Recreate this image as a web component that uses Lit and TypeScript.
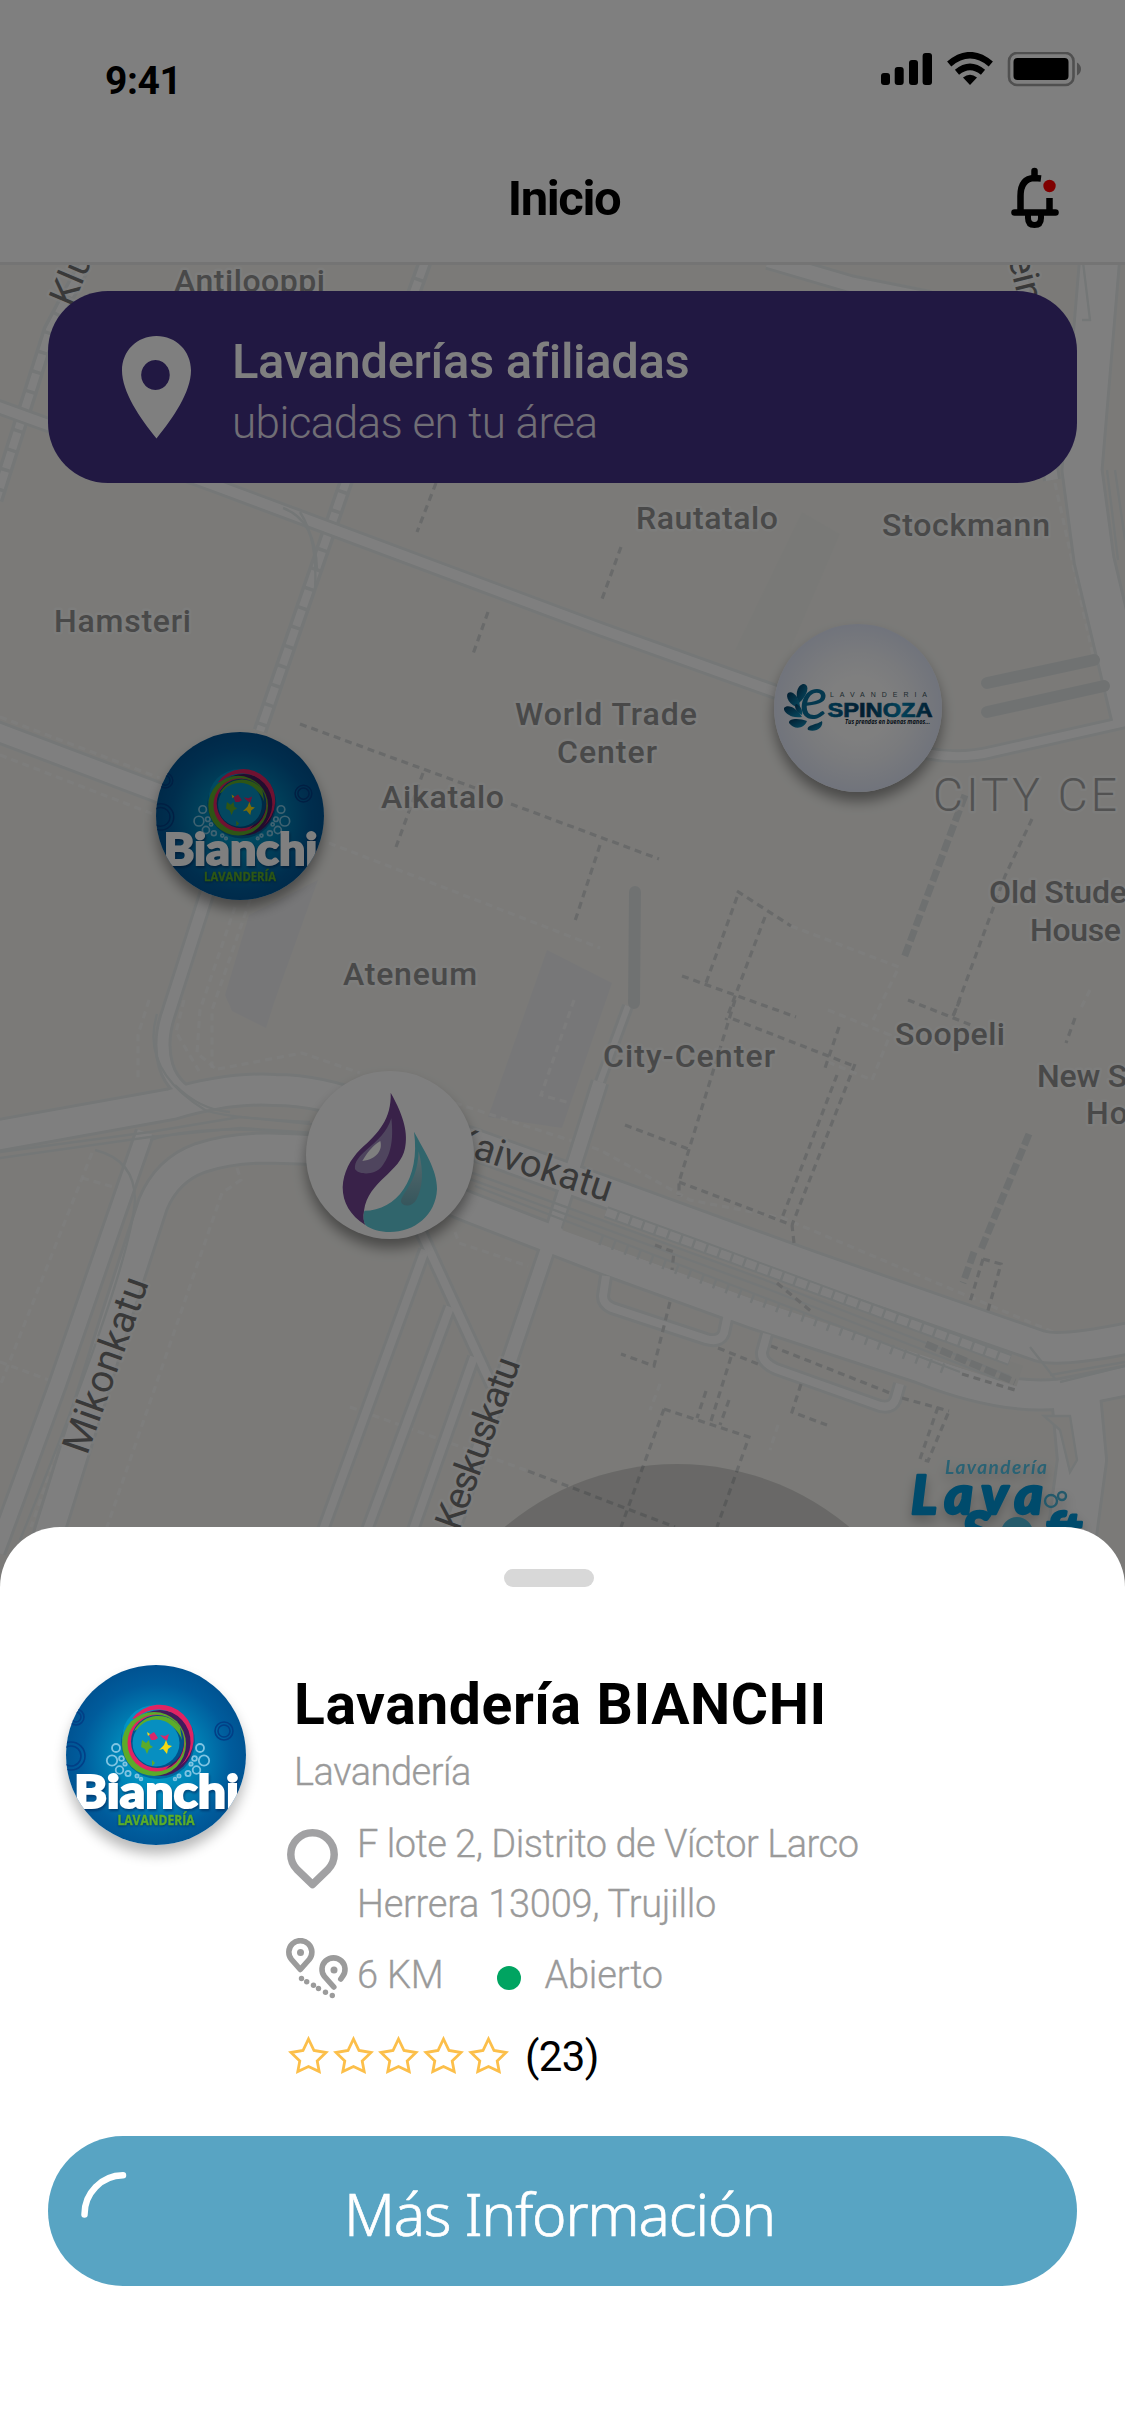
import { LitElement, html, svg, css } from "lit";
import { customElement } from "lit/decorators.js";

interface Road { d: string; w: number; }
interface Label { t: string; x: number; y: number; len: number; size?: number; kind?: string; rot?: number; }

/* Streets, widths in px. Drawn twice: casing first, then the white surface. */
const ROADS: Road[] = [
  { d: "M-10 404 L214 485 L600 629 L790 697", w: 10 },
  { d: "M925 753 Q960 760 992 752 L1130 721", w: 8 },
  { d: "M-5 731 L170 797", w: 17 },
  { d: "M230 820 L207 893 L168 1015 Q159 1042 166 1066 Q174 1092 205 1102", w: 11 },
  { d: "M145 1132 L57 1386 L-4 1552", w: 15 },
  { d: "M425 1250 L323 1530", w: 8 },
  { d: "M450 1307 L367 1530", w: 8 },
  { d: "M474 1357 L413 1530", w: 8 },
  { d: "M421 1232 L492 1386", w: 8 },
  { d: "M628 1006 L600 1082", w: 6 },
  { d: "M600 1082 L547 1250 L452 1530", w: 13 },
  { d: "M606 1276 L603 1296 Q603 1304 612 1308 L706 1339 Q720 1343 724 1333 L728 1314", w: 8 },
  { d: "M767 1334 L762 1352 Q761 1362 776 1369 L880 1406 Q893 1409 896 1398 L900 1384", w: 8 },
  { d: "M1100 255 L1082 470 L1094 560 L1132 720", w: 37 },
  { d: "M1018 255 L1052 480", w: 12 },
  { d: "M1075 1385 L1082 1460 L1062 1610", w: 46 },
  { d: "M768 260 L850 284 L930 300", w: 14 },
  { d: "M-5 1136 L172 1104 Q230 1087 275 1090 Q320 1090 370 1110 L470 1143 L600 1190 L812 1267 L1040 1346 Q1060 1352 1130 1338", w: 28 },
  { d: "M40 1562 L115 1321 L153 1204 Q167 1170 200 1158 Q230 1148 268 1148 L330 1150 L471 1208 L603 1259 L755 1314 L920 1368 Q1000 1400 1060 1394 L1130 1380", w: 27 },
];
const BRICK: Road[] = [
  { d: "M425 262 L346 482 L260 731", w: 8 },
  { d: "M86 262 L50 330 L-4 500", w: 8 },
];
/* Tram tracks and other hairlines. */
const TRACKS = [
  "M0 1152 L150 1132 L240 1117 L330 1126 L470 1172 L760 1278 L1010 1376",
  "M0 1158 L150 1137 L240 1128 L330 1134 L470 1179 L760 1286 L1000 1380",
  "M95 1150 Q135 1160 135 1200 Q130 1270 20 1540",
  "M150 1140 Q210 1122 310 1135",
  "M475 1186 L600 1234 L760 1296 L960 1372",
  "M283 508 Q316 520 317 570",
  "M300 512 Q318 540 315 590",
  "M157 1014 Q140 1070 205 1110 Q225 1118 310 1122",
  "M175 1085 Q200 1110 230 1112",
  "M1107 470 L1118 560 M1115 470 L1125 540 M1083 262 L1090 320 L1082 320",
  "M1030 1347 L1056 1380 M1060 1382 L1125 1366 M1050 1375 L1125 1362",
];
const DASH_DARK = [
  "M436 483 L417 532", "M488 612 L473 654", "M300 724 L475 788", "M511 804 L659 859", "M423 773 L396 847", "M600 845 L574 924",
  "M621 547 L602 599", "M737 891 L791 926", "M737 897 L706 983", "M765 917 L726 1020", "M682 976 L796 1017", "M1032 819 L1005 876 L953 1017",
  "M908 1000 L971 1025", "M960 1000 L953 1016", "M735 1000 L679 1182 L679 1196", "M733 1019 L854 1066", "M839 1027 L825 1068",
  "M837 1075 L782 1218", "M855 1064 L792 1225", "M625 1125 L691 1150", "M679 1182 L792 1225 L794 1243", "M670 1302 L654 1366 L621 1354",
  "M718 1348 L758 1364", "M731 1357 L711 1421", "M706 1391 L697 1418", "M729 1400 L720 1425", "M664 1409 L749 1437 L717 1527",
  "M664 1409 L621 1527", "M528 1471 L675 1527", "M801 1384 L792 1412 L827 1425", "M771 1346 L890 1393", "M902 1398 L949 1411",
  "M938 1407 L920 1459 L928 1461 L949 1411", "M983 1259 L969 1305", "M983 1259 L1001 1264 L987 1314", "M1075 1018 L1066 1043",
  "M655 1245 L674 1252 L672 1270", "M777 1283 L812 1312", "M962 1374 L1015 1390",
];
const DASH_LIGHT = [
  "M0 717 L160 778", "M0 755 L153 814", "M329 843 L600 948", "M218 1069 L302 1053 L360 1073", "M455 1103 L600 1150 L690 1200 L783 1218 L1072 1340",
  "M237 1168 L241 1180 L222 1193 L107 1527", "M147 1193 L31 1527", "M92 1153 L0 1386", "M350 1407 L528 1471", "M455 1232 L459 1243 L528 1266",
  "M235 907 L200 1010 L197 1053 L218 1071", "M250 900 L212 1010 L212 1068", "M149 1000 L138 1035 L138 1078", "M184 1000 L176 1032 L199 1071",
  "M791 926 L899 967 L873 1020", "M574 1000 L541 1095 L570 1103", "M828 1010 L890 1035 L872 1080 L828 1062", "M1055 483 L1094 660", "M1100 1410 L1106 1460 L1093 1527",
  "M1090 990 L1080 1010 M660 1384 L650 1410 M778 1425 L770 1450", "M82 1178 L117 1188 M0 1362 L65 1386",
];
const LABELS: Label[] = [
  { t: "Antilooppi", x: 174, y: 292, len: 151 },
  { t: "Hamsteri", x: 54, y: 631.5, len: 137 },
  { t: "Rautatalo", x: 636, y: 529, len: 142 },
  { t: "Stockmann", x: 882, y: 535.5, len: 168 },
  { t: "World Trade", x: 515, y: 725, len: 182 },
  { t: "Center", x: 557, y: 762.5, len: 100 },
  { t: "Aikatalo", x: 381, y: 808, len: 123 },
  { t: "Ateneum", x: 343, y: 985, len: 134 },
  { t: "City-Center", x: 603, y: 1067, len: 172 },
  { t: "Soopeli", x: 895, y: 1045, len: 110 },
  { t: "Old Stude", x: 989, y: 903, len: 138 },
  { t: "House", x: 1030, y: 940.5, len: 91 },
  { t: "New S", x: 1037, y: 1087, len: 90 },
  { t: "Ho", x: 1086, y: 1124, len: 42 },
  { t: "CITY CE", x: 933, y: 810.6, len: 184, size: 46, kind: "district" },
  { t: "Kaivokatu", x: 449, y: 1150, len: 167, size: 38, kind: "street", rot: 18.2 },
  { t: "Mikonkatu", x: 87, y: 1456, len: 184, size: 39, kind: "street", rot: -70.3 },
  { t: "Keskuskatu", x: 459, y: 1532, len: 180, size: 38, kind: "street", rot: -70 },
  { t: "Kluuvi", x: 72, y: 308, len: 102, size: 37, kind: "street", rot: -67 },
  { t: "ein", x: 1008, y: 258, len: 48, size: 37, kind: "street", rot: 76 },
];

@customElement("city-map")
class CityMap extends LitElement {
  static styles = css`
    :host { display: block; }
    svg { display: block; }
    path { fill: none; }
    .casing { stroke: #eaefef; }
    .road { stroke: #ffffff; }
    .track { stroke: #e9eeee; stroke-width: 2.4; }
    .bed { stroke: #f3f2ef; stroke-width: 22; }
    .dark { stroke: #d2d4d4; stroke-width: 3.2; stroke-dasharray: 7 5; }
    .light { stroke: #ffffff; stroke-width: 3; stroke-dasharray: 7 5; opacity: .6; }
    .trees { stroke: #e1e5e5; stroke-width: 12; stroke-linecap: round; }
    .hedge { stroke: #dce0e0; stroke-width: 7; stroke-dasharray: 12 4; }
    .block { fill: #efeff1; }
    .stall { stroke: #e9eeee; stroke-width: 10; stroke-dasharray: 2.5 11; }
    .stall-in { stroke: #e9eeee; stroke-width: 12; }
    text { font-family: Roboto, "Liberation Sans", sans-serif; paint-order: stroke; stroke: #ffffff; stroke-opacity: .55; stroke-width: 5px; stroke-linejoin: round; }
    .poi { fill: #929292; font-weight: 500; }
    .district { fill: #a4a4a4; font-weight: 300; }
    .street { fill: #727272; font-weight: 400; }
  `;
  render() {
    const all = (c: string, list: string[]) => list.map((d) => svg`<path class=${c} d=${d}></path>`);
    return html`<svg width="1125" height="1340" viewBox="0 262 1125 1340">
      <rect y="262" width="1125" height="1340" fill="#f6f5f1"></rect>
      <polygon class="block" points="249,915 318,880 275,1000 266,1028 232,1011 225,995"></polygon>
      <polygon class="block" points="547,950 612,983 562,1128 488,1117"></polygon>
      <polygon points="802,512 840,534 790,650 735,650" fill="#f3f2ee" opacity=".8"></polygon>
      ${all("light", DASH_LIGHT)}
      ${BRICK.map((r) => svg`<path class="casing" d=${r.d} stroke-width=${r.w + 7}></path><path class="road" d=${r.d} stroke-width=${r.w} stroke-dasharray="17 3.5"></path>`)}
      ${ROADS.map((r) => svg`<path class="casing" stroke-linejoin="round" d=${r.d} stroke-width=${r.w + 6}></path>`)}
      ${ROADS.map((r) => svg`<path class="road" stroke-linejoin="round" d=${r.d} stroke-width=${r.w}></path>`)}
      <path class="bed" d="M566 1220 L760 1290 L1020 1376"></path>
      <path class="stall-in" d="M606 1212 L700 1246 L1010 1360"></path>
      <path stroke="#fff" stroke-width="8" stroke-dasharray="11 2.5" d="M606 1212 L700 1246 L1010 1360"></path>
      <path class="stall" d="M600 1240 L760 1301 L950 1371"></path>
      ${all("track", TRACKS)}
      <path d="M1044 1416 L1070 1416 L1077 1460 L1070 1472 L1060 1430 Z" style="fill:#f6f5f1" class="track"></path>
      <path class="trees" d="M635 892 L634 1003 M987 683 L1094 660 M987 712 L1104 686"></path>
      <path class="hedge" d="M965 795 L904 958 M1029 1134 L980 1252 M974 1252 L963 1283 M926 1344 L1015 1382"></path>
      ${all("dark", DASH_DARK)}
      ${LABELS.map((l) => svg`<text class=${l.kind ?? "poi"} x=${l.x} y=${l.y} font-size=${l.size ?? 32} textLength=${l.len}
        transform=${`rotate(${l.rot ?? 0} ${l.x} ${l.y})`}>${l.t}</text>`)}
      <circle cx="677" cy="1731" r="267" fill="#000" opacity=".145"></circle>
    </svg>`;
  }
}

@customElement("bianchi-logo")
class BianchiLogo extends LitElement {
  static styles = css`
    :host { display: block; border-radius: 50%; overflow: hidden; }
    svg { display: block; width: 100%; height: 100%; }
    .name { font: 900 46px Lato, "Open Sans", sans-serif; fill: #fff; stroke: #fff; stroke-width: 2px; filter: drop-shadow(1px 2px 1px rgba(0, 40, 90, .6)); }
    .sub { font: 700 14px "Open Sans", sans-serif; fill: #5aae2a; stroke: #5aae2a; stroke-width: .4px; filter: drop-shadow(0 1px 1px rgba(0, 30, 70, .6)); }
    .bubble { fill: none; stroke: #7fc4e2; stroke-width: 1.8; }
    .far { fill: none; stroke: #023f86; stroke-width: 1.6; }
  `;
  render() {
    const bubbles = [[50, 83, 4], [46, 95.5, 5.2], [53.5, 105, 3.8], [55.5, 93.5, 2.4], [59, 99, 1.7], [62, 108.5, 2.6], [71, 111, 1.6], [75, 114, 1.4]];
    const far = [[10, 52, 8], [10, 52, 5], [5, 91, 14], [5, 91, 10], [158, 66, 9], [158, 66, 6]];
    return html`<svg viewBox="0 0 180 180">
      <defs>
        <radialGradient id="bg" cx=".5" cy=".52" r=".52"><stop offset="0" stop-color="#00a5cf"></stop><stop offset=".42" stop-color="#0086b8"></stop><stop offset=".8" stop-color="#005c9c"></stop><stop offset="1" stop-color="#005291"></stop></radialGradient>
      </defs>
      <rect width="180" height="180" fill="url(#bg)"></rect>
      ${far.map(([x, y, r]) => svg`<circle class="far" cx=${x} cy=${y} r=${r}></circle>`)}
      ${bubbles.map(([x, y, r]) => svg`<circle class="bubble" cx=${x} cy=${y} r=${r}></circle><circle class="bubble" cx=${184 - x} cy=${y} r=${r}></circle>`)}
      <circle cx="92" cy="77" r="37" fill="#00457f" opacity=".55"></circle>
      <circle cx="89" cy="73" r="33" fill="#0093c4"></circle>
      <circle cx="94" cy="78" r="33" fill="#421a5c"></circle>
      <path d="M66 54 A34 34 0 1 1 114 101 A31 31 0 1 0 70 53 Z" fill="#df2463"></path>
      <circle cx="88" cy="79" r="32" fill="#5cab2a"></circle>
      <path d="M110 54 A32 32 0 0 1 104 107 L116 99 A30 30 0 0 0 114 58 Z" fill="#421a5c"></path>
      <circle cx="90" cy="78" r="28.5" fill="#df2463"></circle>
      <path d="M113 62 A28 28 0 0 1 100 104 A34 34 0 0 0 108 62 Z" fill="#421a5c"></path>
      <circle cx="91.5" cy="76.5" r="26.5" fill="#00528c"></circle>
      <path d="M68 66 A27 27 0 0 1 114 62 L116 75 A27 27 0 0 0 72 64 Z" fill="#5cab2a"></path>
      <circle cx="90" cy="78" r="23.5" fill="#078fc1"></circle>
      <path d="M76 75 L80 78 L83 75 L84 80 L87 82 L83 84 L81 89 L79 84 L75 82 Z M86 95 L89 98 L86 101 Z" fill="#5cab2a"></path>
      <path d="M83 70 L88 67 L92 73 L89 75 L85 75 Z M94 70 L99 71 L103 69 L101 76 L97 73 Z" fill="#d8286b"></path>
      <path d="M100 75 L102 80 L106 81 L102 84 L101 89 L97 84 L93 85 L98 80 Z M81 67 L84 69 L82 71 Z" fill="#f3d811"></path>
      <text class="name" x="8" y="142.500" textLength="165" lengthAdjust="spacingAndGlyphs">Bianchi</text>
      <text class="sub" x="51.500" y="160" textLength="77" lengthAdjust="spacingAndGlyphs">LAVANDERÍA</text>
    </svg>`;
  }
}

@customElement("espinoza-logo")
class EspinozaLogo extends LitElement {
  static styles = css`
    :host { display: block; border-radius: 50%; background: radial-gradient(circle closest-side, #ffffff 35%, #f4f6fb 65%, #e2e8f8 100%); }
    svg { display: block; width: 100%; height: 100%; }
    .small { font: 400 7px "Liberation Sans", sans-serif; fill: #3b5560; }
    .name { font: 700 21px "Liberation Sans", sans-serif; fill: url(#ink); stroke: url(#ink); stroke-width: .7px; }
    .tag { font: italic 700 7.4px "Open Sans", sans-serif; fill: #0a2230; }
    .e { font: italic 400 58px Lato, sans-serif; fill: #08709c; }
  `;
  render() {
    const petals = [
      "M25 79 C20 70 24 60 30 60 C36 61 34 71 25 79 Z", "M26 84 C15 82 11 72 14 69 C19 66 26 74 26 84 Z",
      "M28 93 C17 95 9 88 10 84 C14 79 24 85 28 93 Z", "M33 97 C30 105 20 106 15 99 C14 94 26 94 33 97 Z",
      "M48 97 C50 103 42 109 34 106 C32 101 42 101 48 97 Z", "M28 91 C21 87 20 82 22 80 C26 81 29 86 28 91 Z",
    ];
    return html`<svg viewBox="0 0 168 168">
      <defs>
        <linearGradient id="ink" x1="0" x2="1"><stop offset="0" stop-color="#006f9f"></stop><stop offset=".35" stop-color="#06385b"></stop><stop offset=".7" stop-color="#0385b5"></stop><stop offset="1" stop-color="#053a5f"></stop></linearGradient>
        <linearGradient id="leaf" x1="0" y1="0" x2="1" y2="1"><stop offset="0" stop-color="#04375c"></stop><stop offset="1" stop-color="#1097c4"></stop></linearGradient>
      </defs>
      ${petals.map((d) => svg`<path d=${d} fill="url(#leaf)"></path>`)}
      <text class="e" x="26" y="95">e</text>
      <text class="small" x="56" y="73" textLength="97">LAVANDERIA</text>
      <text class="name" x="53.500" y="92.500" textLength="105" lengthAdjust="spacingAndGlyphs">SPINOZA</text>
      <text class="tag" x="71" y="100" textLength="85" lengthAdjust="spacingAndGlyphs">Tus prendas en buenas manos...</text>
    </svg>`;
  }
}

@customElement("drop-logo")
class DropLogo extends LitElement {
  static styles = css`
    :host { display: block; border-radius: 50%; background: #fff; }
    svg { display: block; width: 100%; height: 100%; }
  `;
  render() {
    return html`<svg viewBox="48 36 504 504">
      <defs>
        <linearGradient id="sheen" x1="0" x2="0" y1="0" y2="1"><stop offset="0" stop-color="#b4d8e0"></stop><stop offset="1" stop-color="#6fa8b4" stop-opacity=".85"></stop></linearGradient>
      </defs>
      <path fill="#724592" d="M302 101 C344 175 354 225 345 268 C332 340 235 365 222 455 Q218 480 226 498 C180 470 158 430 158 385 C160 340 180 302 212 270 C265 222 305 180 302 101 Z"></path>
      <path fill="#60cad8" d="M372 218 C402 275 441 330 441 390 C438 470 372 519 300 519 C270 519 244 512 226 498 Q217 480 223 455 C320 455 392 360 372 218 Z"></path>
      <path fill="#9f8bbd" d="M304 178 C312 250 300 290 276 322 C255 350 205 348 195 330 C192 308 210 290 230 272 C265 242 290 220 304 178 Z"></path>
      <path fill="#ffffff" d="M271 246 C278 272 262 300 217 306 C230 284 245 262 271 246 Z"></path>
      <path fill="url(#sheen)" d="M386 277 C402 340 398 385 380 420 C368 444 338 445 333 428 C335 400 382 375 386 277 Z"></path>
    </svg>`;
  }
}

@customElement("lavasoft-logo")
class LavasoftLogo extends LitElement {
  static styles = css`
    :host { display: block; }
    svg { display: block; overflow: visible; filter: drop-shadow(0 6px 6px rgba(0, 0, 0, .25)); }
    .top { font: italic 700 19px Lato, sans-serif; fill: #54c5e8; }
    .big { font: italic 900 54px Lato, sans-serif; fill: #0097d8; stroke: #0097d8; stroke-width: 2.6px; stroke-linejoin: round; }
    .ring { fill: none; stroke: #49b3d6; stroke-width: 2.4; }
  `;
  render() {
    return html`<svg width="180" height="90" viewBox="907 1455 180 90">
      <text class="top" x="945" y="1474" textLength="102">Lavandería</text>
      <text class="big" x="911" y="1514" textLength="132">Lava</text>
      <text class="big" x="962" y="1550" textLength="120">Soft</text>
      <circle cx="1017" cy="1533" r="16" fill="#4db6d6"></circle>
      <circle class="ring" cx="1051" cy="1501" r="6"></circle>
      <circle class="ring" cx="1062" cy="1496" r="4"></circle>
    </svg>`;
  }
}

@customElement("app-root")
class AppRoot extends LitElement {
  static styles = css`
    :host { display: block; width: 1125px; height: 2436px; overflow: hidden; background: #fff; font-family: Roboto, "Liberation Sans", sans-serif; color: #000; }
    * { box-sizing: border-box; }
    svg { display: block; flex: none; }
    .screen { position: relative; display: flex; flex-direction: column; height: 2436px; }
    .header { display: flex; flex-direction: column; height: 265px; background: #fff; border-bottom: 3px solid #e8e8e8; flex: none; }
    .status { display: flex; justify-content: space-between; padding: 52px 44px 0 105px; height: 118px; }
    .time { font-weight: 700; font-size: 39px; line-height: 44px; margin-top: 7px; letter-spacing: -.4px; }
    .icons { display: flex; }
    .nav { display: grid; grid-template-columns: 1fr auto 1fr; align-items: start; padding: 42px 62px 0; }
    .heading { grid-column: 2; margin: 9px 0 0 3px; font-weight: 700; font-size: 49px; line-height: 60px; letter-spacing: -1.400px; }
    .bell { justify-self: end; margin-top: 5px; }
    .map { position: relative; flex: none; height: 1325px; overflow: hidden; }
    .map city-map { position: absolute; left: 0; top: -3px; }
    .pin { position: absolute; width: 168px; height: 168px; box-shadow: 0 9px 13px rgba(0, 0, 0, .4); }
    .p1 { left: 156px; top: 467px; }
    .p2 { left: 774px; top: 359px; }
    .p3 { left: 306px; top: 806px; }
    .p4 { position: absolute; left: 907px; top: 1190px; }
    .banner { position: relative; display: flex; height: 192px; margin: 26px 48px 0; padding: 45px 0 0 74px; border-radius: 60px; background: #423085; }
    .copy { padding-left: 38px; }
    .b1 { margin: -4px 0 0; color: #fff; font-weight: 500; font-size: 49px; line-height: 60px; letter-spacing: -.350px; }
    .b2 { margin: 1px 0 0; color: #e0dcea; font-weight: 300; font-size: 44px; line-height: 60px; letter-spacing: -.600px; }
    .scrim { position: absolute; left: 0; top: 0; width: 1125px; height: 1590px; background: rgba(0, 0, 0, .5); }
    .sheet { position: relative; flex: none; display: flex; flex-direction: column; margin-top: -63px; height: 909px; background: #fff; border-radius: 60px 60px 0 0; padding: 42px 48px 0; }
    .handle { width: 90px; height: 18px; margin-left: 456px; border-radius: 9px; background: #d8d8d8; }
    .place { display: flex; gap: 40px; margin: 78px 0 0 18px; height: 471px; }
    .avatar { flex: none; width: 180px; height: 180px; box-shadow: 0 9px 13px rgba(0, 0, 0, .28); }
    .info { display: flex; flex-direction: column; }
    .name { margin: 10px 0 0 8px; font-weight: 700; font-size: 57px; line-height: 60px; letter-spacing: .600px; white-space: nowrap; }
    .type { margin: 15px 0 0 8px; line-height: 44px; letter-spacing: -.500px; }
    .muted { color: #9a9a9a; font-size: 38px; font-weight: 300; -webkit-text-stroke: .3px #9a9a9a; }
    .row { display: flex; line-height: 60px; white-space: nowrap; }
    .ico { width: 71px; flex: none; }
    .address { margin-top: 20px; letter-spacing: -.500px; }
    .second { letter-spacing: -.250px; }
    .distance { margin-top: 11px; height: 60px; align-items: center; letter-spacing: -.200px; }
    .dot { width: 24px; height: 24px; margin: 5px 23px 0 54px; border-radius: 50%; background: #00a461; }
    .rating { margin-top: 27px; line-height: 50px; font-size: 42px; }
    .count { margin-left: 14px; letter-spacing: -.600px; }
    .cta { display: flex; align-items: center; height: 150px; border: 0; border-radius: 75px; background: #58a4c3; color: #fff; padding: 0 0 0 32px; font: 300 58.500px "Noto Sans", sans-serif; letter-spacing: -1.150px; -webkit-text-stroke: .7px #fff; }
    .cta span { margin: 3px 0 0 216px; white-space: nowrap; }
    .cta svg { margin-top: -33px; }
  `;
  render() {
    const star = "M22.500 8 L28 19.500 L40 21.500 L31.200 30 L33.200 40.500 L22.500 35.500 L11.800 40.500 L13.800 30 L5 21.500 L17 19.500 Z";
    return html`<div class="screen">
      <header class="header">
        <div class="status">
          <div class="time">9:41</div>
          <div class="icons">
            <svg width="200" height="36" viewBox="881 52 200 36">
              <rect x="881" y="73" width="9" height="12" rx="3"></rect><rect x="894.700" y="67" width="9" height="18" rx="3"></rect>
              <rect x="909" y="60" width="9" height="25" rx="3"></rect><rect x="922.600" y="53" width="9.400" height="32" rx="3"></rect>
              <g fill="none" stroke="#000" stroke-width="6.500"><path d="M949.200 64 Q970 46.500 990.800 64"></path><path d="M957 72.300 Q970 61.500 983 72.300"></path></g>
              <path d="M963 77.500 Q970 72 977 77.500 L970 85 Z"></path>
              <rect x="1009" y="53" width="64.500" height="32" rx="8" fill="none" stroke="#a0a0a0" stroke-width="2.600"></rect>
              <rect x="1013.500" y="58" width="55" height="22" rx="4"></rect><path d="M1077 62.500 Q1081 65 1081 69 Q1081 73 1077 75.500 Z" fill="#a0a0a0"></path>
            </svg>
          </div>
        </div>
        <div class="nav">
          <h1 class="heading">Inicio</h1>
          <svg class="bell" width="54" height="66" viewBox="1009 165 54 66" fill="none" stroke="#000" stroke-width="6.500" stroke-linecap="round">
            <path d="M1034.500 171 V177"></path><path d="M1020.500 211 V196 Q1020.500 178.500 1034.500 178 Q1037 178 1041 178.500" stroke-linecap="butt"></path>
            <path d="M1014.500 212.500 H1055.500"></path><path d="M1049.500 198 V211" stroke-linecap="butt"></path>
            <path d="M1028 215 V218 Q1028 225 1034.500 225 Q1041 225 1041 218 V215" stroke-width="6" stroke-linecap="butt"></path>
            <circle cx="1049.500" cy="186" r="6.200" fill="#ff0000" stroke="none"></circle>
          </svg>
        </div>
      </header>
      <main class="map">
        <city-map></city-map>
        <bianchi-logo class="pin p1"></bianchi-logo>
        <espinoza-logo class="pin p2"></espinoza-logo>
        <drop-logo class="pin p3"></drop-logo>
        <lavasoft-logo class="p4"></lavasoft-logo>
        <section class="banner">
          <svg width="72" height="104" viewBox="0 0 72 104"><path fill="#fff" fill-rule="evenodd" d="M34.500 0 C15 0 0 15 0 34.500 C0 56 18 82 34.500 102.500 C51 82 69 56 69 34.500 C69 15 54 0 34.500 0 Z M33.500 24 A14.300 15 0 1 1 33.400 24 Z"></path></svg>
          <div class="copy"><p class="b1">Lavanderías afiliadas</p><p class="b2">ubicadas en tu área</p></div>
        </section>
      </main>
      <div class="scrim"></div>
      <section class="sheet">
        <div class="handle"></div>
        <div class="place">
          <bianchi-logo class="avatar"></bianchi-logo>
          <div class="info">
            <h2 class="name">Lavandería BIANCHI</h2>
            <div class="type muted">Lavandería</div>
            <div class="row address muted">
              <div class="ico"><svg width="54" height="78" viewBox="0 -15 54 78" fill="none" stroke="#a1a1a3" stroke-width="7.500" stroke-linejoin="round"><path d="M26.500 3.750 A21.700 21.700 0 0 0 4.800 25.500 Q4.800 34 11 40.500 L26.500 55.500 L42 40.500 Q48.200 34 48.200 25.500 A21.700 21.700 0 0 0 26.500 3.750 Z"></path></svg></div>
              <div>F lote 2, Distrito de Víctor Larco<br><span class="second">Herrera 13009, Trujillo</span></div>
            </div>
            <div class="row distance muted">
              <div class="ico"><svg width="64" height="74" viewBox="285 1938 64 74" fill="none" stroke="#9b9b9b" stroke-width="5.600" stroke-linecap="round" stroke-linejoin="round">
                <path d="M299.300 1969.500 L290.500 1959.500 A11.500 11.500 0 1 1 308.200 1959.500 Z"></path>
                <path d="M332.800 1987 L323.500 1976.500 A11.500 11.500 0 1 1 341.500 1976.500 L339.800 1979"></path>
                <g fill="#9b9b9b" stroke="none"><circle cx="299.500" cy="1952.500" r="3.500"></circle><circle cx="333" cy="1970" r="3.500"></circle>
                <circle cx="300.500" cy="1978.500" r="2.700"></circle><circle cx="305.700" cy="1981.700" r="2.700"></circle><circle cx="312.500" cy="1985.300" r="2.700"></circle><circle cx="317.500" cy="1988.500" r="2.700"></circle><circle cx="324.500" cy="1992.300" r="2.700"></circle><circle cx="331.300" cy="1995.500" r="2.700"></circle></g></svg></div>
              <span>6 KM</span><i class="dot"></i><span>Abierto</span>
            </div>
            <div class="row rating">
              <svg width="225" height="50" viewBox="0 0 225 50" fill="none" stroke="#fcbf4a" stroke-width="2.800">
                ${[0, 1, 2, 3, 4].map((i) => svg`<path d=${star} transform=${`translate(${i * 45} -1)`}></path>`)}
              </svg>
              <span class="count">(23)</span>
            </div>
          </div>
        </div>
        <button class="cta">
          <svg width="48" height="48" viewBox="80 2168 48 48" fill="none" stroke="#fff" stroke-width="6.500" stroke-linecap="round"><path d="M84.500 2211.500 A39 39 0 0 1 123 2172.300"></path></svg>
          <span>Más Información</span>
        </button>
      </section>
    </div>`;
  }
}
